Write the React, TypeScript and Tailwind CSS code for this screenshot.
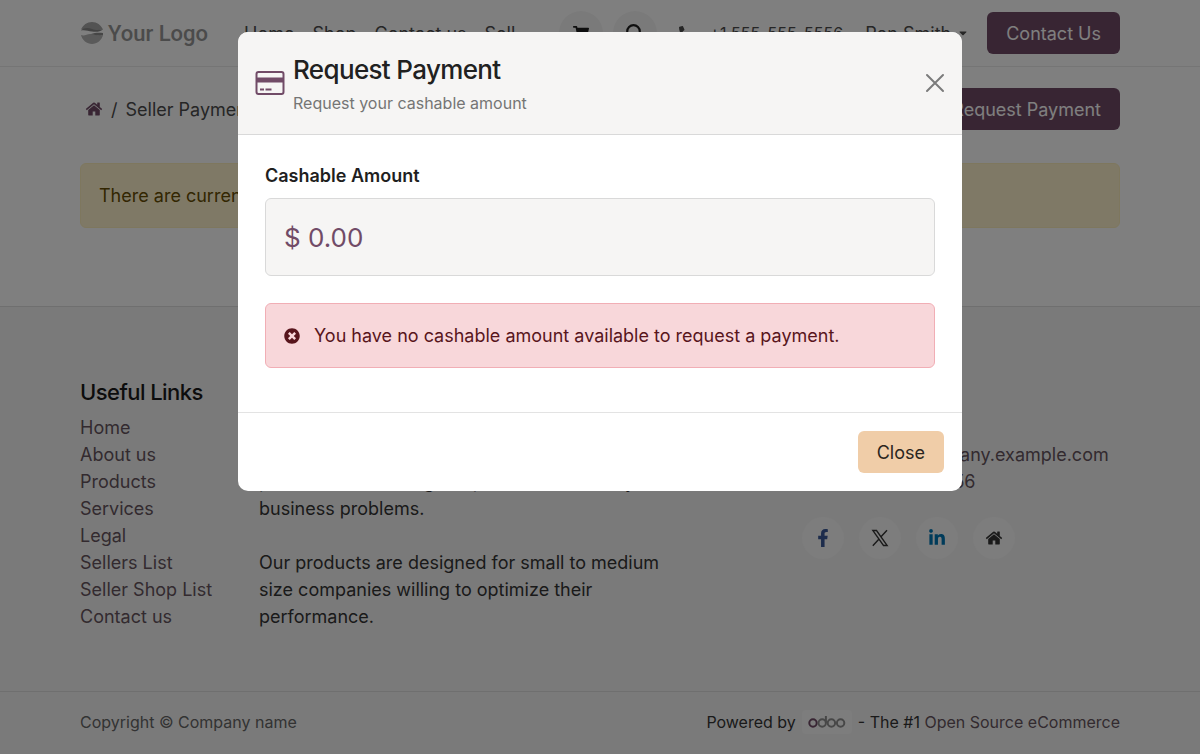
import React from 'react';
import {
  FaCaretDown,
  FaEnvelope,
  FaFacebookF,
  FaLinkedinIn,
  FaPhoneAlt,
  FaShoppingCart,
  FaTimesCircle,
} from 'react-icons/fa';

const navLinks = ['Home', 'Shop', 'Contact us', 'Sell'];

const usefulLinks = [
  'Home',
  'About us',
  'Products',
  'Services',
  'Legal',
  'Sellers List',
  'Seller Shop List',
  'Contact us',
];

const HomeIcon: React.FC<{ className?: string }> = ({ className }) => (
  <svg viewBox="0 0 1792 1792" fill="currentColor" className={className} aria-hidden="true">
    <path d="M1472 992v480q0 26-19 45t-45 19h-384v-384h-256v384h-384q-26 0-45-19t-19-45v-480q0-1 .5-3t.5-3l575-474 575 474q1 2 1 6zm223-69l-62 74q-8 9-21 11h-3q-13 0-21-7l-692-577-692 577q-12 8-24 7-13-2-21-11l-62-74q-8-10-7-23.5t11-21.5l719-599q32-26 76-26t76 26l244 204v-195q0-14 9-23t23-9h192q14 0 23 9t9 23v408l219 182q10 8 11 21.5t-7 23.5z" />
  </svg>
);

const SearchIcon = () => (
  <svg viewBox="0 0 18 18" fill="none" stroke="currentColor" className="size-[18px]" aria-hidden="true">
    <circle cx="7.500" cy="7.500" r="6.300" strokeWidth="2.200" />
    <path d="M12.200 12.200l4.300 4.300" strokeWidth="3" strokeLinecap="round" />
  </svg>
);

const XIcon = () => (
  <svg viewBox="0 0 18 18" fill="none" stroke="currentColor" className="size-[18px]" aria-hidden="true">
    <path d="M1.800 1.500h3.700l10.700 15h-3.700z" strokeWidth="1.300" />
    <path d="M16 1.200l-6 6.600M7.800 10.200l-6 6.600" strokeWidth="1.400" />
  </svg>
);

const CardIcon = () => (
  <svg viewBox="0 0 30 24" className="h-6 w-[30px] shrink-0 text-[#714b67]" aria-hidden="true">
    <rect x="1.5" y="1" width="27" height="22" rx="2" fill="none" stroke="currentColor" strokeWidth="2" />
    <path d="M1.5 6.500h27v5h-27zM5 17.500h4v2H5zM10.500 17.500h6v2h-6z" fill="currentColor" />
  </svg>
);

const Logo = () => (
  <a href="#" className="flex items-center gap-1 text-[#969696]">
    <svg viewBox="0 0 24 24" className="size-6" aria-hidden="true">
      <path d="M1 8.500C3 4 7 1 12 1s9 3 11 7.500c-4 .5-7 1.500-11 .5S5 7.500 1 8.500z" fill="#a6a6a6" />
      <path d="M1 9.500c3-3 7-3 11-1.500 4 1.500 7 1 11 .5-3 2.500-7 2.500-11 2s-7-2-11-1z" fill="#868686" />
      <path d="M1 14c4 1.500 6-1.500 10-1s8 2 12 1c-1 5-6 9-11 9S2 19 1 14z" fill="#b4b4b4" />
      <path d="M11 13c4-1.500 8-1.500 12-1v2c-4 1-8 0-12-1z" fill="#8c8c8c" />
    </svg>
    <span className="font-[Roboto,sans-serif] text-[22px] font-medium">Your Logo</span>
  </a>
);

const Header = () => (
  <header className="border-b border-[#ebebeb] bg-white">
    <div className="mx-auto flex h-[66px] w-full max-w-[1040px] items-center">
      <Logo />
      <nav className="ml-9 flex gap-[18px] text-[#4c4c4c]">
        {navLinks.map((label) => (
          <a key={label} href="#">
            {label}
          </a>
        ))}
      </nav>
      <div className="ml-auto flex items-center text-[#4c4c4c]">
        <a href="#" aria-label="Cart" className="flex size-11 items-center justify-center rounded-full bg-[#f5f5f5] text-[#1f1f1f]">
          <FaShoppingCart className="size-4" />
        </a>
        <button aria-label="Search" className="ml-[10px] flex size-11 items-center justify-center rounded-full bg-[#f5f5f5] text-[#1f1f1f]">
          <SearchIcon />
        </button>
        <a href="#" className="ml-[22px] flex items-center gap-4 text-base">
          <FaPhoneAlt className="size-[14px]" />
          +1 555-555-5556
        </a>
        <button className="ml-[22px] flex items-center gap-[6px]">
          Ron Smith
          <FaCaretDown className="size-3" />
        </button>
        <button className="ml-[18px] h-[42px] rounded-md bg-[#714b67] px-[19px] text-white">Contact Us</button>
      </div>
    </div>
  </header>
);

const Footer = () => (
  <footer className="border-t border-[#dedede] bg-[#f5f5f5]">
    <div className="mx-auto grid w-full max-w-[1040px] grid-cols-[179fr_543fr_318fr] pt-[70px] pb-[61px]">
      <div>
        <h5 className="mb-[7px] text-[22px] leading-[30px] font-medium tracking-tight text-[#1a1a1a]">Useful Links</h5>
        <ul className="text-[#66555f]">
          {usefulLinks.map((label) => (
            <li key={label}>
              <a href="#">{label}</a>
            </li>
          ))}
        </ul>
      </div>
      <div className="pr-[125px] text-[#343434]">
        <h5 className="mb-[7px] text-[22px] leading-[30px] font-medium tracking-tight text-[#1a1a1a]">About us</h5>
        <p>
          We are a team of passionate people whose goal is to improve everyone&apos;s life through disruptive
          products. We build great products to solve your business problems.
        </p>
        <p className="mt-[27px]">
          Our products are designed for small to medium size companies willing to optimize their performance.
        </p>
      </div>
      <div className="text-[#66555f]">
        <h5 className="mb-[7px] text-[22px] leading-[30px] font-medium tracking-tight text-[#1a1a1a]">Get in touch</h5>
        <ul>
          <li>
            <a href="#">Contact us</a>
          </li>
          <li className="flex items-center gap-[7px]">
            <FaEnvelope className="size-4 shrink-0" />
            <a href="#">info@yourcompany.example.com</a>
          </li>
          <li className="flex items-center gap-[7px]">
            <FaPhoneAlt className="size-4 shrink-0" />
            <a href="#">+1 555-555-5556</a>
          </li>
        </ul>
        <div className="mt-[22px] flex gap-[15px]">
          <a href="#" aria-label="Facebook" className="flex size-[42px] items-center justify-center rounded-full bg-[#fafafa] text-[#3b5998]">
            <FaFacebookF className="size-[18px]" />
          </a>
          <a href="#" aria-label="X" className="flex size-[42px] items-center justify-center rounded-full bg-[#fafafa] text-[#343434]">
            <XIcon />
          </a>
          <a href="#" aria-label="LinkedIn" className="flex size-[42px] items-center justify-center rounded-full bg-[#fafafa] text-[#0077b5]">
            <FaLinkedinIn className="size-[18px]" />
          </a>
          <a href="#" aria-label="Website" className="flex size-[42px] items-center justify-center rounded-full bg-[#fafafa] text-[#343434]">
            <HomeIcon className="size-[18px]" />
          </a>
        </div>
      </div>
    </div>
    <div className="border-t border-[#dedede]">
      <div className="mx-auto flex h-[62px] w-full max-w-[1040px] items-center justify-between pb-[2px] text-base">
        <span className="text-[#666666]">Copyright © Company name</span>
        <div className="flex items-center text-[#343434]">
          Powered by
          <a href="#" aria-label="Odoo" className="mx-[6px] rounded bg-[#fafafa] px-[6px] py-1">
            <svg viewBox="0 0 38 16" className="h-4 w-[38px]" fill="none" strokeWidth="2" aria-hidden="true">
              <circle cx="5" cy="9" r="3.700" stroke="#714b67" />
              <g stroke="#8f8f8f">
                <circle cx="14.200" cy="9" r="3.700" />
                <path d="M17.900 9V2" />
                <circle cx="23.400" cy="9" r="3.700" />
                <circle cx="32.600" cy="9" r="3.700" />
              </g>
            </svg>
          </a>
          <span>
            - The #1 <a href="#" className="text-[#66555f]">Open Source eCommerce</a>
          </span>
        </div>
      </div>
    </div>
  </footer>
);

const RequestPaymentModal = () => (
  <div className="fixed inset-0 z-10 overflow-hidden bg-black/50 px-4 pt-8">
    <div
      role="dialog"
      aria-modal="true"
      aria-labelledby="modal-title"
      className="mx-auto w-full max-w-[724px] overflow-hidden rounded-[10px] bg-white">
      <div className="flex items-center border-b border-[#d9d9d9] bg-[#f6f5f4] px-[17px] py-[18px]">
        <CardIcon />
        <div className="ml-2 grow">
          <h4 id="modal-title" className="text-[26px] leading-10 font-medium tracking-tight text-[#212121]">
            Request Payment
          </h4>
          <p className="text-base leading-[26px] text-[#757575]">Request your cashable amount</p>
        </div>
        <button aria-label="Close dialog" className="text-[#7b7b7b]">
          <svg viewBox="0 0 20 20" className="size-5" stroke="currentColor" strokeWidth="2" strokeLinecap="round">
            <path d="M2 2l16 16M18 2L2 18" />
          </svg>
        </button>
      </div>
      <div className="px-[27px] pt-[27px] pb-11">
        <label htmlFor="cashable" className="mb-[9px] block font-semibold text-[#1f1f1f]">
          Cashable Amount
        </label>
        <input
          id="cashable"
          readOnly
          value="$ 0.00"
          className="block h-[78px] w-full rounded-md border border-[#d9d9d9] bg-[#f6f5f4] px-[18px] text-[26px] text-[#714b67] outline-none"
        />
        <div role="alert" className="mt-[27px] flex items-center gap-[14px] rounded-md border border-[#f1aeb5] bg-[#f8d7da] p-[18px] text-[#58151c]">
          <FaTimesCircle className="size-4 shrink-0" />
          You have no cashable amount available to request a payment.
        </div>
      </div>
      <div className="flex justify-end border-t border-[#e3e3e3] p-[18px]">
        <button className="h-[42px] rounded-md bg-[#f0cda8] px-[19px] text-[#2b2620]">Close</button>
      </div>
    </div>
  </div>
);

export default function App() {
  return (
    <div className="min-h-screen bg-white font-[Inter,sans-serif] text-[18px] leading-[27px]">
      <Header />
      <main className="mx-auto w-full max-w-[1040px] pt-[21px] pb-[78px]">
        <div className="flex items-center justify-between">
          <div className="flex items-center gap-2 pl-[5px] text-[#4c4c4c]">
            <a href="#" aria-label="Home" className="text-[#714b67]">
              <HomeIcon className="size-[18px]" />
            </a>
            <span>/</span>
            <span>Seller Payments</span>
          </div>
          <button className="h-[42px] rounded-md bg-[#714b67] px-[19px] text-white">Request Payment</button>
        </div>
        <div role="status" className="mt-[33px] rounded-md border border-[#fdeebd] bg-[#fff3cd] p-[18px] text-[#664d03]">
          There are currently no payments for your account.
        </div>
      </main>
      <Footer />
      <RequestPaymentModal />
    </div>
  );
}
